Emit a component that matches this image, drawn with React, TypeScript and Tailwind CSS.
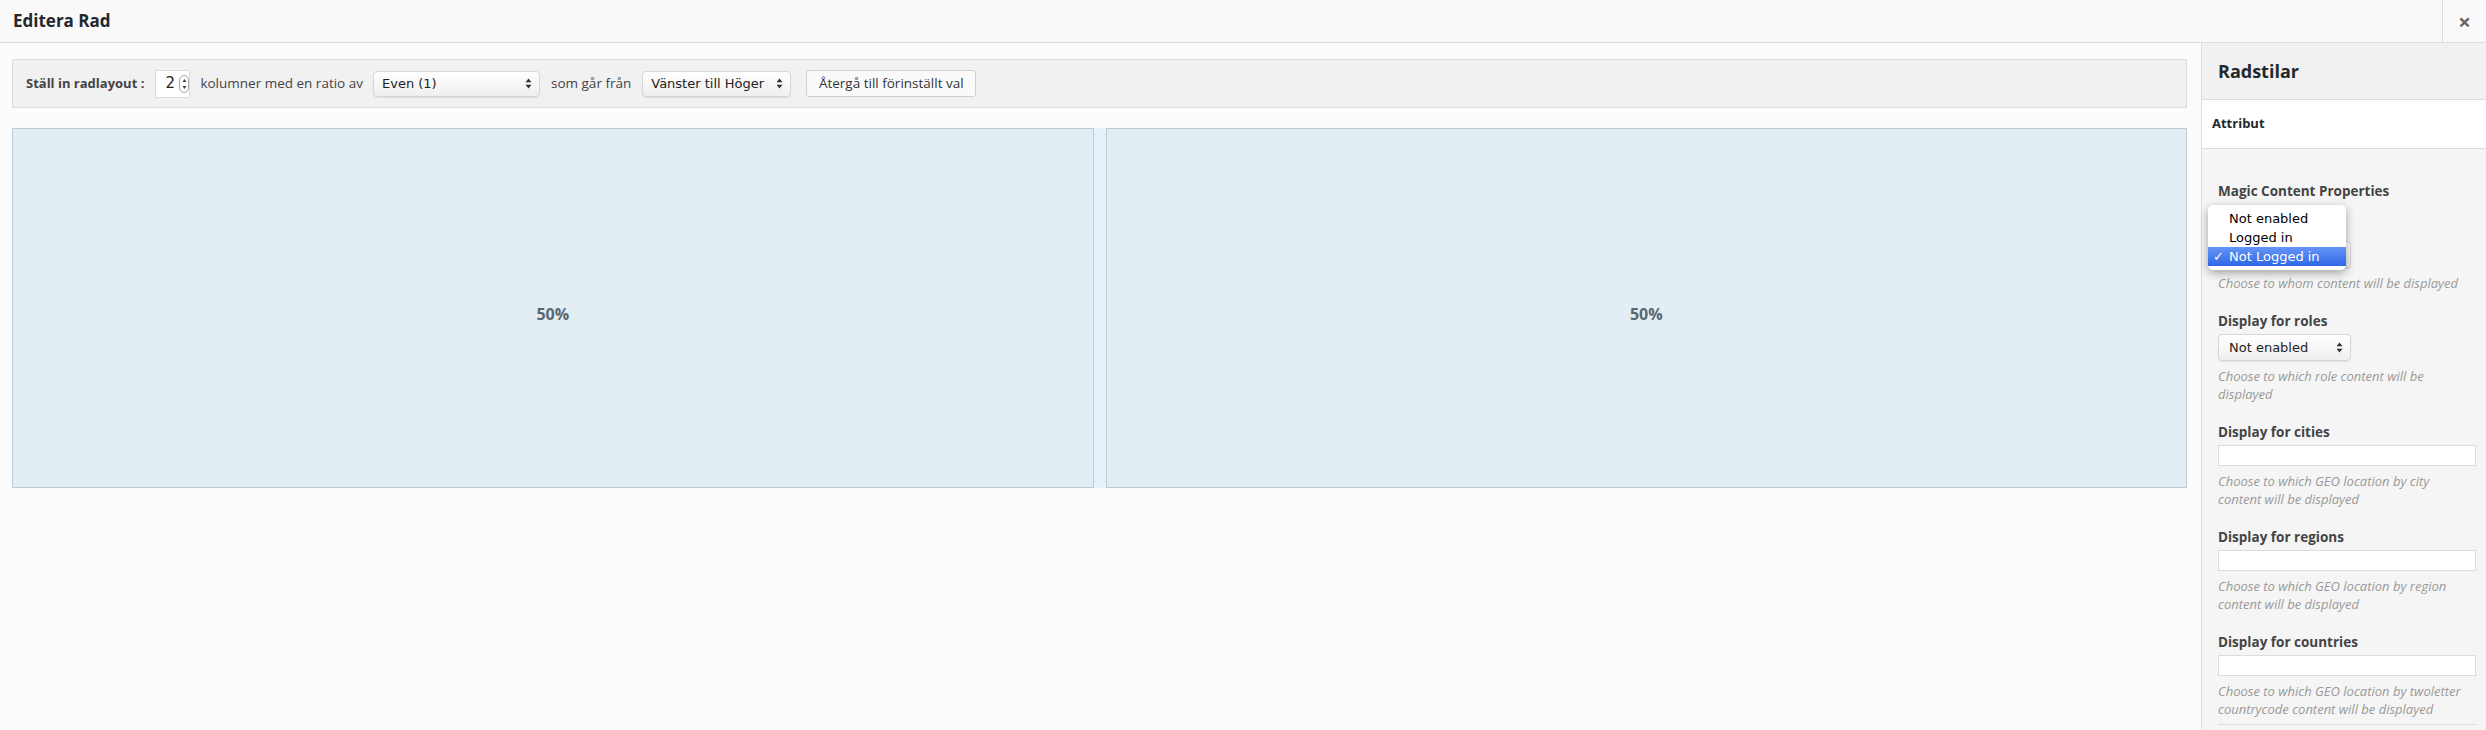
// Redigera en rad: kolumnlayout till vänster, radstilar (Magic Content) till höger.
import type { ReactNode } from 'react';

const sans = 'font-["Open_Sans",sans-serif]';
const sys = 'font-["DejaVu_Sans",sans-serif]';

function UpDown({ color = '#333' }: { color?: string }) {
  return (
    <svg width="7" height="11" viewBox="0 0 7 11">
      <path d="M3.5 0.5 L6.5 4.2 H0.5 Z" fill={color} />
      <path d="M3.5 10.5 L6.5 6.8 H0.5 Z" fill={color} />
    </svg>
  );
}

function MacSelect({ value, className }: { value: string; className: string }) {
  return (
    <div
      className={
        'flex items-center justify-between rounded-[4px] border border-[#d6d6d6] bg-gradient-to-b from-white to-[#efefef] pr-[7px] text-[13px] text-[#222] shadow-[0_1px_1px_rgba(0,0,0,0.08)] ' +
        sys +
        ' ' +
        className
      }
    >
      <span>{value}</span>
      <UpDown />
    </div>
  );
}

function Field({ label, help, children }: { label: string; help: ReactNode; children: ReactNode }) {
  return (
    <div className="flex flex-col">
      <span className="text-[13.5px] leading-[18px] font-bold text-[#444]">{label}</span>
      {children}
      <p className="mt-[6px] pr-[6px] text-[13px] leading-[18px] text-[#999] italic">{help}</p>
    </div>
  );
}

const textInput = 'mt-[4px] h-[21px] w-full border border-[#dcdcdc] bg-white';

export default function App() {
  return (
    <div className={'flex h-[730px] w-[2486px] flex-col overflow-hidden bg-[#fcfcfc] ' + sans}>
      {/* Titelrad */}
      <div className="flex h-[43px] shrink-0 items-stretch border-b border-[#dcdcdc] bg-[#f9f9f9]">
        <h1 className="flex flex-1 items-center pl-[13px] text-[17px] font-bold text-[#23282d]">Editera Rad</h1>
        <div className="flex w-[44px] items-center justify-center border-l border-[#dcdcdc] text-[22px] font-bold text-[#666]">
          ×
        </div>
      </div>

      <div className="flex flex-1">
        {/* Huvudyta */}
        <div className="flex flex-1 flex-col pt-[16px] pr-[14px] pl-[12px]">
          <div className="flex h-[49px] items-center border border-[#dcdcdc] bg-[#f1f1f1] pl-[13px] text-[13.5px] text-[#444]">
            <span className="text-[13px] font-bold">Ställ in radlayout :</span>
            <div className="ml-[11px] flex h-[28px] w-[35px] items-center border border-[#dcdcdc] bg-white pl-[9px]">
              <span className={'text-[15px] text-[#222] ' + sys}>2</span>
              <div className="ml-[4px] flex h-[18px] w-[11px] flex-col items-center justify-center rounded-[5px] border border-[#aaa]">
                <svg width="5" height="12" viewBox="0 0 5 12">
                  <path d="M2.5 1 L4.5 4 H0.5 Z" fill="#444" />
                  <path d="M2.5 11 L4.5 8 H0.5 Z" fill="#444" />
                </svg>
              </div>
            </div>
            <span className="ml-[10px]">kolumner med en ratio av</span>
            <MacSelect value="Even (1)" className="ml-[10px] h-[26px] w-[167px] pl-[8px]" />
            <span className="ml-[11px]">som går från</span>
            <MacSelect value="Vänster till Höger" className="ml-[11px] h-[26px] w-[149px] pl-[8px]" />
            <button className="ml-[15px] h-[27px] w-[170px] rounded-[3px] border border-[#cfcfcf] bg-[#fafafa] text-[13.5px] text-[#333]">
              Återgå till förinställt val
            </button>
          </div>

          <div className="mt-[20px] flex h-[360px]">
            <div className="flex flex-1 items-center justify-center border border-[#bfcbd4] bg-[#e2eef4] pt-[12px]">
              <span className="text-[16px] font-bold text-[#5a6670]">50%</span>
            </div>
            <div className="w-[12px] bg-[#e4f3fa]" />
            <div className="flex flex-1 items-center justify-center border border-[#bfcbd4] bg-[#e2eef4] pt-[12px]">
              <span className="text-[16px] font-bold text-[#5a6670]">50%</span>
            </div>
          </div>
        </div>

        {/* Radstilar */}
        <aside className="flex w-[285px] shrink-0 flex-col border-l border-[#dcdcdc] bg-[#f5f5f5]">
          <div className="flex h-[57px] items-center border-b border-[#dcdcdc] bg-[#f1f1f1] pl-[16px] text-[18px] font-bold text-[#23282d]">
            Radstilar
          </div>
          <div className="flex h-[49px] items-center border-b border-[#dcdcdc] bg-white pl-[10px] text-[13px] font-bold text-[#23282d]">
            Attribut
          </div>

          <div className="flex flex-col gap-[20px] pt-[33px] pr-[10px] pl-[16px]">
            <div className="flex flex-col">
              <span className="text-[13.5px] leading-[18px] font-bold text-[#444]">Magic Content Properties</span>
              <div className="relative mt-[19px]">
                <Field label="Display for" help="Choose to whom content will be displayed">
                  <MacSelect value="" className="mt-[4px] h-[27px] w-[133px] pl-[10px]" />
                </Field>
                {/* Öppen rullgardinsmeny */}
                <div
                  className={
                    'absolute top-[-14px] left-[-10px] w-[138px] rounded-[5px] bg-white py-[4px] text-[13px] leading-[19px] text-black shadow-[0_3px_10px_rgba(0,0,0,0.35)] ' +
                    sys
                  }
                >
                  <div className="pl-[21px]">Not enabled</div>
                  <div className="pl-[21px]">Logged in</div>
                  <div className="relative bg-gradient-to-b from-[#6494f6] to-[#2f67e6] pl-[21px] text-white">
                    <span className="absolute left-[5px]">✓</span>
                    Not Logged in
                  </div>
                </div>
              </div>
            </div>

            <Field label="Display for roles" help="Choose to which role content will be displayed">
              <MacSelect value="Not enabled" className="mt-[4px] h-[27px] w-[133px] pl-[10px]" />
            </Field>
            <Field label="Display for cities" help="Choose to which GEO location by city content will be displayed">
              <div className={textInput} />
            </Field>
            <Field label="Display for regions" help="Choose to which GEO location by region content will be displayed">
              <div className={textInput} />
            </Field>
            <Field
              label="Display for countries"
              help="Choose to which GEO location by twoletter countrycode content will be displayed"
            >
              <div className={textInput} />
            </Field>
          </div>
          <div className="mt-[6px] mr-[10px] ml-[16px] border-t border-[#dcdcdc]" />
        </aside>
      </div>
    </div>
  );
}
